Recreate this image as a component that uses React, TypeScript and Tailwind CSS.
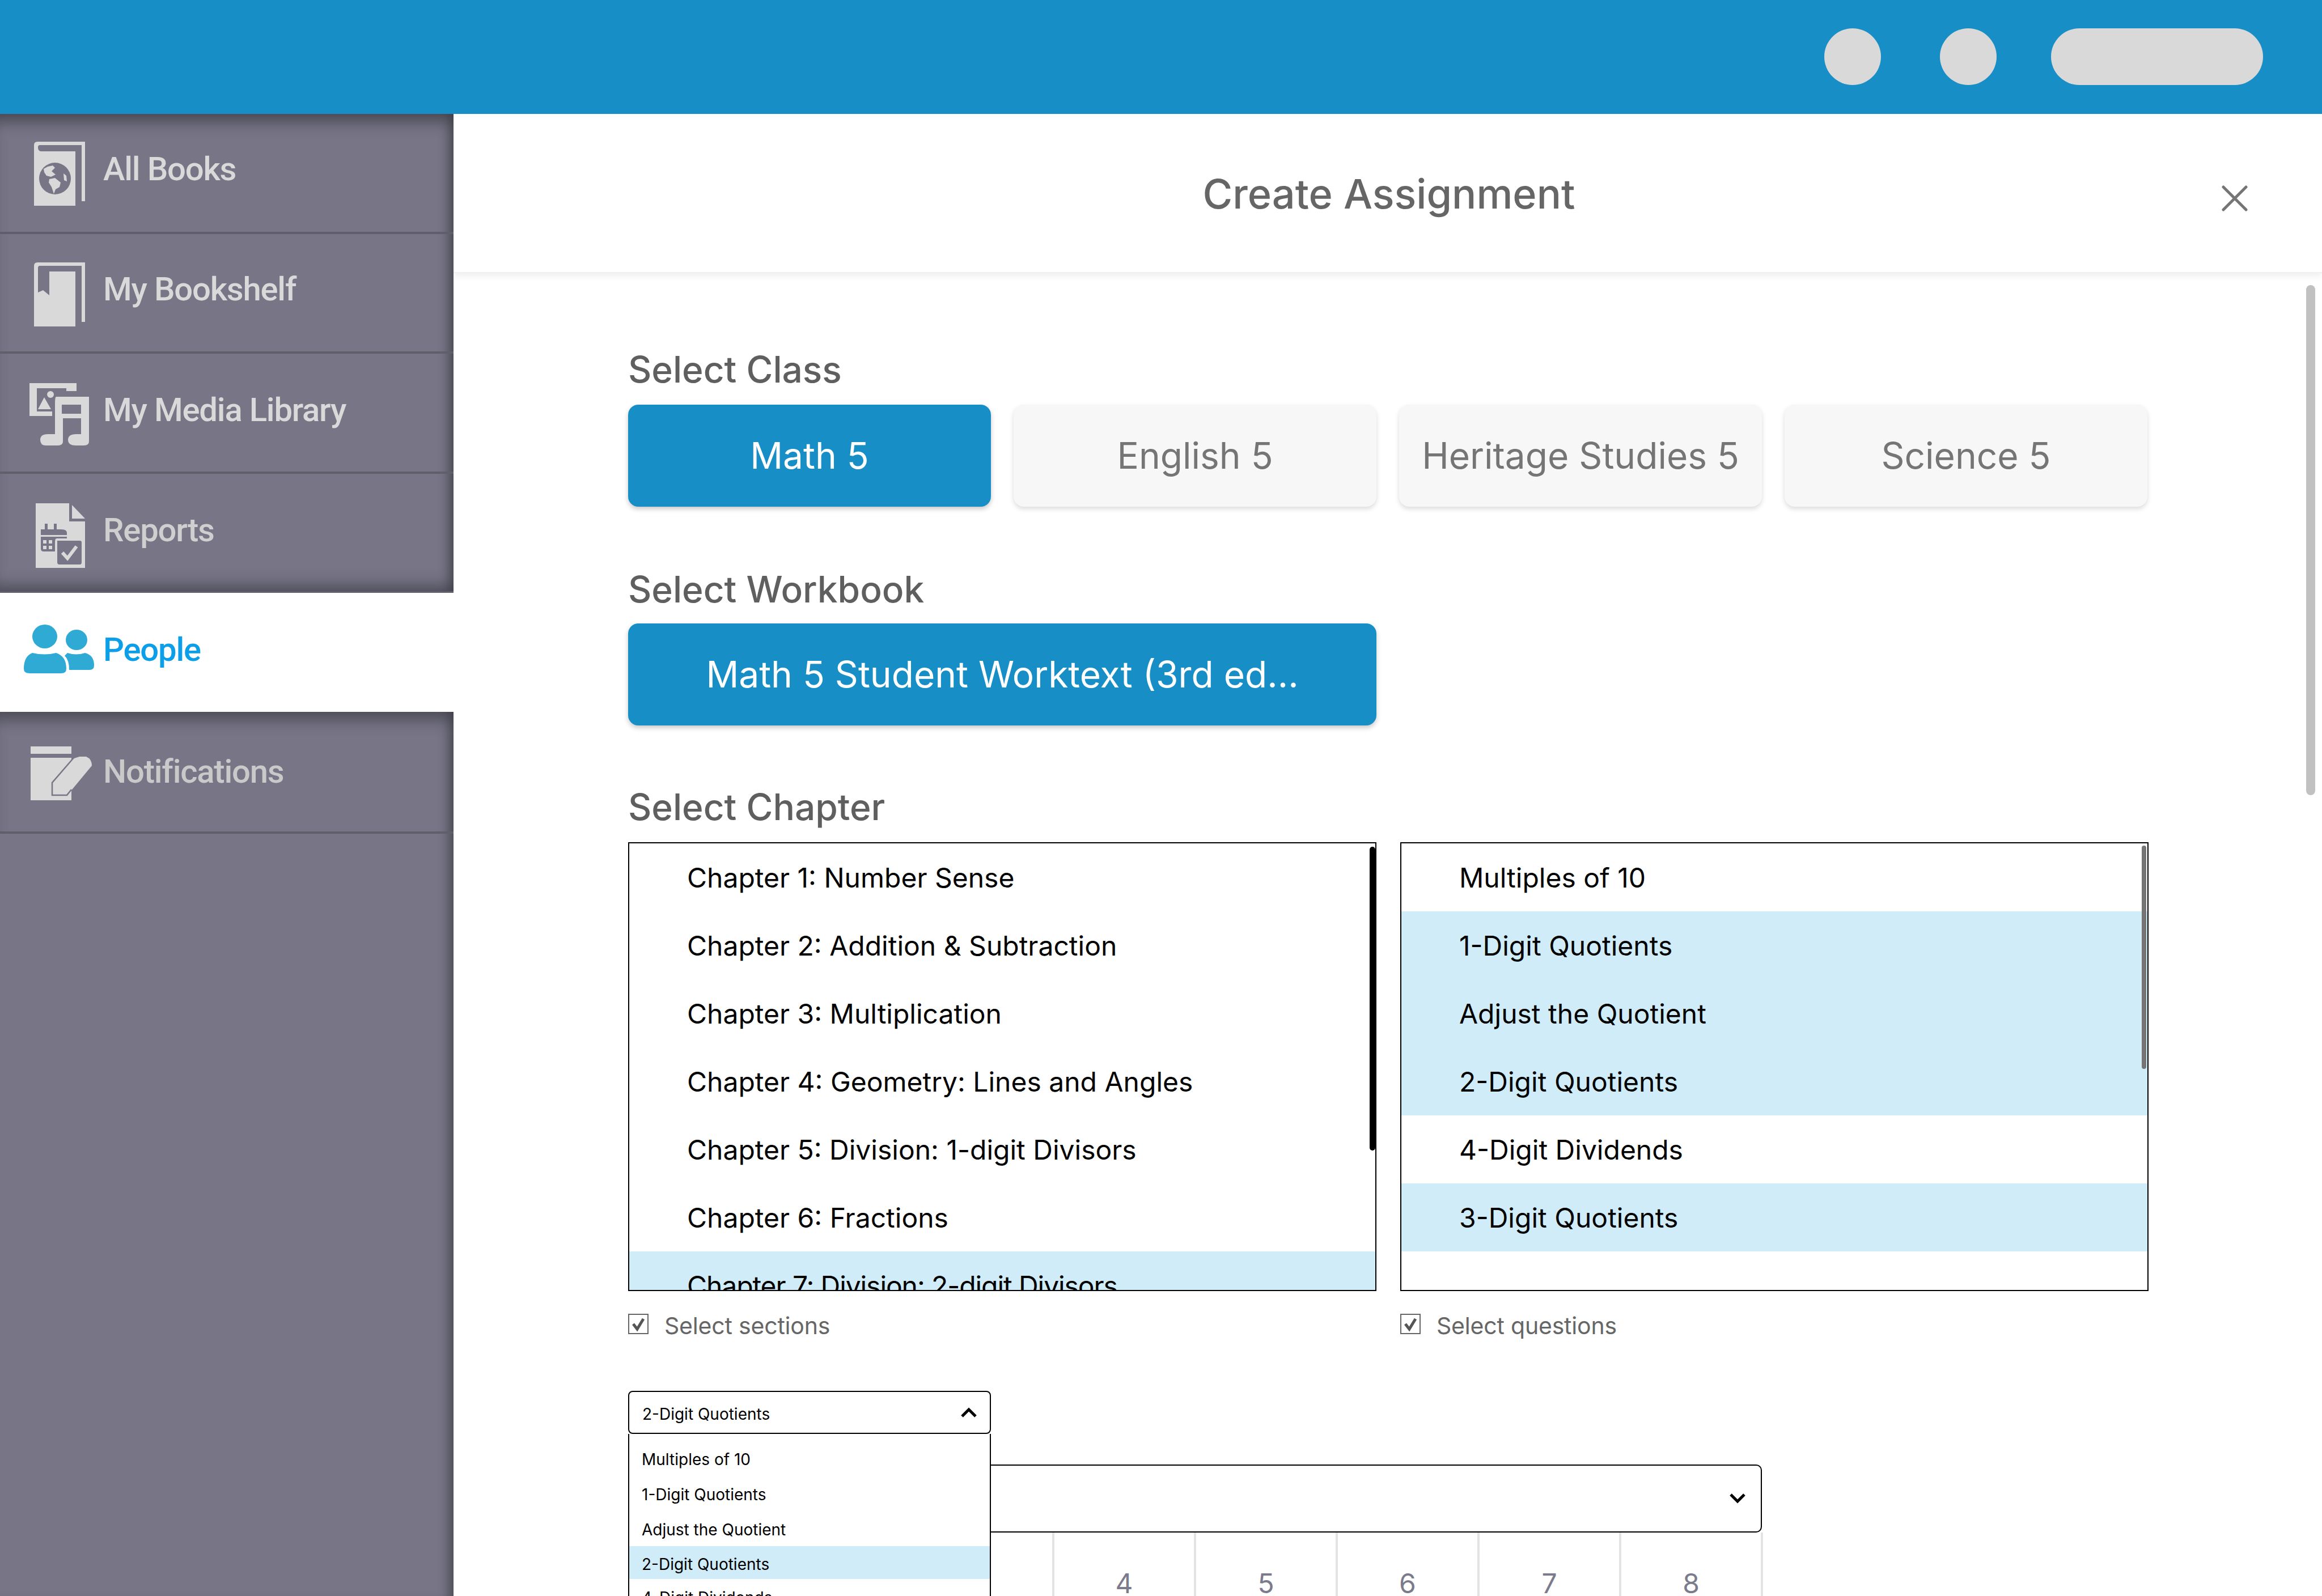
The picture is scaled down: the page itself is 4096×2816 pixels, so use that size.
const SANS = "font-['Inter','Liberation_Sans',sans-serif]";

function AllBooksIcon() {
  return (
    <svg width="90" height="113" viewBox="0 0 90 113" fill="#d9d9d9">
      <path d="M6 0H90V105H84V6H10Q7 6 7 10Q7 16 12 17H73V113H0V6Q0 0 6 0Z" />
      <circle cx="37" cy="65" r="28" fill="#777586" />
      <path d="M17 48L24 44L33 42L37 46L31 52L38 58L30 62L22 60L18 54ZM27 66L37 64L47 72L45 80L38 84L35 92L31 80L26 72ZM52 56L57 60L58 70L53 68Z" />
    </svg>
  );
}

function BookshelfIcon() {
  return (
    <svg width="90" height="113" viewBox="0 0 90 113" fill="#d9d9d9">
      <path d="M6 0H90V105H84V6H10Q7 6 7 10V53L16 49L27 58V16H73V113H0V6Q0 0 6 0Z" />
    </svg>
  );
}

function MediaIcon() {
  return (
    <svg width="105" height="110" viewBox="0 0 105 110" fill="#d9d9d9">
      <path fillRule="evenodd" d="M0 0H83V14H65V9H13V50H40V58H0Z" />
      <path d="M15 46L26 25L38 46ZM37 14A6 6 0 1 0 37.1 26A6 6 0 1 0 37 14Z" />
      <path fillRule="evenodd" d="M47 24H105V103Q105 110 96 110H82Q68 110 68 100Q68 90 82 90H91V62H59V103Q59 110 50 110H29Q19 110 19 100Q19 90 32 90H45V36Q45 24 47 24ZM57 38V54H91V38Z" />
    </svg>
  );
}

function ReportsIcon() {
  return (
    <svg width="88" height="114" viewBox="0 0 88 114">
      <path fill="#d9d9d9" d="M0 0H59V32H87V114H0Z" />
      <path fill="#d9d9d9" d="M64 3L87 27H64Z" />
      <path fill="#777586" d="M9 46H16V36H21V46H32V36H37V46H45Q55 46 55 52V56H9ZM9 59H55V62H37Q34 62 34 68V85H14Q9 85 9 80Z" />
      <path fill="#d9d9d9" d="M13 65H19V71H13ZM23 65H29V71H23ZM13 75H19V81H13ZM23 75H29V81H23Z" />
      <path fill="#777586" d="M38 66H78Q81 66 81 69V104Q81 108 78 108H42Q38 108 38 104Z" />
      <path fill="none" stroke="#d9d9d9" strokeWidth="6" d="M47 87L56 97L72 76" />
    </svg>
  );
}

function PeopleIcon() {
  return (
    <svg width="124" height="86" viewBox="0 0 124 86" fill="#2eaad4">
      <ellipse cx="37" cy="21" rx="22" ry="21" />
      <ellipse cx="93" cy="27" rx="19" ry="18" />
      <path d="M15 50Q37 55 57 50Q75 56 75 78Q75 86 66 86H10Q0 86 0 78Q0 56 15 50Z" />
      <path d="M77 50Q92 55 108 50Q124 54 124 72Q124 80 116 80H80Q80 62 72 55Z" />
    </svg>
  );
}

function NotificationsIcon() {
  return (
    <svg width="108" height="95" viewBox="0 0 108 95" fill="#d9d9d9">
      <path d="M0 0H72V13H0Z" />
      <path d="M0 20H72V95H0Z" />
      <path d="M74 22L86 18H98Q108 22 108 34L64 87H38V64Z" />
      <path fill="none" stroke="#777586" strokeWidth="2.5" d="M76 20L38 64V86H64L72 76" />
    </svg>
  );
}

const navItems = [
  { label: "All Books", icon: <AllBooksIcon />, left: "pl-[60px]", text: "text-[#d9d9d9]", top: "pt-[49px]", textTop: "top-[62px]" },
  { label: "My Bookshelf", icon: <BookshelfIcon />, left: "pl-[60px]", text: "text-[#d9d9d9]", top: "pt-[50px]", textTop: "top-[62px]" },
  { label: "My Media Library", icon: <MediaIcon />, left: "pl-[52px]", text: "text-[#d9d9d9]", top: "pt-[52px]", textTop: "top-[64px]" },
  { label: "Reports", icon: <ReportsIcon />, left: "pl-[63px]", text: "text-[#cfcfcf]", top: "pt-[52px]", textTop: "top-[64px]" },
];

const NAV_TEXT = "absolute left-[182px] text-[58px] leading-[70px] font-medium tracking-[-1.2px] font-['Roboto',sans-serif]";

function NavRow({ item }: { item: (typeof navItems)[number] }) {
  return (
    <div className={`relative h-[211.6px] ${item.left} ${item.top} border-b-[4px] border-[#5f5e6b]`}>
      {item.icon}
      <span className={`${NAV_TEXT} ${item.textTop} ${item.text}`}>{item.label}</span>
    </div>
  );
}

function Sidebar() {
  return (
    <aside className="relative z-10 w-[800px] h-full shrink-0 bg-[#777586] shadow-[inset_-22px_0_18px_-14px_rgba(60,60,68,0.75)]">
      <div className="shadow-[inset_0_28px_24px_-14px_rgba(60,60,68,0.75)]">
        {navItems.slice(0, 3).map((item) => (
          <NavRow key={item.label} item={item} />
        ))}
      </div>
      <div className="shadow-[inset_0_-28px_24px_-14px_rgba(60,60,68,0.7)]">
        <NavRow item={navItems[3]} />
      </div>
      <div className="relative -mt-[1px] h-[210px] bg-white pl-[42px] pt-[56px]">
        <PeopleIcon />
        <span className={`${NAV_TEXT} top-[65px] text-[#0c9fe9]`}>People</span>
      </div>
      <div className="relative h-[215px] pl-[54px] pt-[61px] border-b-[4px] border-[#5f5e6b] shadow-[inset_0_28px_24px_-14px_rgba(60,60,68,0.7)]">
        <NotificationsIcon />
        <span className={`${NAV_TEXT} top-[70px] text-[#c9c9c9]`}>Notifications</span>
      </div>
    </aside>
  );
}

function ChoiceButton({ label, active, wide }: { label: string; active?: boolean; wide?: boolean }) {
  return (
    <div
      className={`h-[180px] rounded-[18px] flex items-center justify-center text-[64px] ${wide ? "w-[1320px]" : "w-[640px]"} ${
        active
          ? "bg-[#188ec7] text-white shadow-[0_4px_8px_rgba(0,0,0,0.22)]"
          : "bg-[#f7f7f7] text-[#757575] shadow-[0_4px_8px_rgba(0,0,0,0.14)]"
      }`}
    >
      {label}
    </div>
  );
}

function ListBox({
  rows,
  thumb,
}: {
  rows: { label: string; selected?: boolean; tight?: boolean }[];
  thumb: string;
}) {
  return (
    <div className="relative w-[1320px] h-[792px] border-[2px] border-black overflow-hidden">
      {rows.map((r) => (
        <div
          key={r.label}
          className={`h-[120px] flex items-center pl-[102px] pt-[2px] text-[48px] text-black whitespace-nowrap ${r.selected ? "bg-[#d0ecf9]" : "bg-white"} ${r.tight ? "tracking-[-1.08px]" : ""}`}
        >
          {r.label}
        </div>
      ))}
      <div className={thumb} />
    </div>
  );
}

function CheckRow({ label }: { label: string }) {
  return (
    <div className="w-[1320px] flex items-center gap-[28px] h-[36px]">
      <svg width="36" height="36" viewBox="0 0 36 36" className="shrink-0">
        <rect x="1" y="1" width="34" height="34" fill="white" stroke="#666666" strokeWidth="2" />
        <path d="M9 18L16 27L27 9" fill="none" stroke="#555555" strokeWidth="5" />
      </svg>
      <span className="text-[41px] text-[#666666] translate-y-[4px] tracking-[-0.2px]">{label}</span>
    </div>
  );
}

function Chevron({ up }: { up?: boolean }) {
  return (
    <svg width="30" height="18" viewBox="0 0 30 18" className="shrink-0">
      <path d={up ? "M3 16L15 4L27 16" : "M3 2L15 14L27 2"} fill="none" stroke="black" strokeWidth="5" />
    </svg>
  );
}

export default function App() {
  return (
    <div className={`w-[4096px] h-[2816px] overflow-hidden flex flex-col bg-white ${SANS}`}>
      <header className="h-[201px] shrink-0 bg-[#188ec7] flex items-center justify-end pr-[104px] pb-[1px]">
        <div className="w-[100px] h-[100px] rounded-full bg-[#d9d9d9]" />
        <div className="w-[100px] h-[100px] rounded-full bg-[#d9d9d9] ml-[104px]" />
        <div className="w-[374px] h-[100px] rounded-full bg-[#d9d9d9] ml-[96px]" />
      </header>
      <div className="flex flex-1 min-h-0">
        <Sidebar />
        <main className="relative flex-1 min-w-0 flex flex-col">
          <div className="relative h-[281px] shrink-0 flex items-center justify-center border-b-[2px] border-[#f0f0f0] shadow-[0_6px_10px_rgba(0,0,0,0.06)]">
            <h1 className="text-[72px] font-medium text-[#666666] translate-x-[2px] translate-y-[1px]">Create Assignment</h1>
            <svg width="46" height="46" viewBox="0 0 46 46" className="absolute left-[3119px] top-[126px]">
              <path d="M3 3L43 43M43 3L3 43" fill="none" stroke="#757575" strokeWidth="5" strokeLinecap="round" />
            </svg>
          </div>
          <div className="absolute left-[3268px] top-[302px] w-[16px] h-[900px] rounded-full bg-[#c1c1c1]" />
          <div className="pl-[308px] flex flex-col items-start">
            <h2 className="mt-[130px] h-[80px] text-[64px] leading-[80px] font-medium text-[#5f5f5f]">Select Class</h2>
            <div className="flex gap-[40px] mt-[22px]">
              <ChoiceButton label="Math 5" active />
              <ChoiceButton label="English 5" />
              <ChoiceButton label="Heritage Studies 5" />
              <ChoiceButton label="Science 5" />
            </div>
            <h2 className="mt-[106px] h-[80px] text-[64px] leading-[80px] font-medium text-[#5f5f5f]">Select Workbook</h2>
            <div className="mt-[20px]">
              <ChoiceButton label="Math 5 Student Worktext (3rd ed..." active wide />
            </div>
            <h2 className="mt-[104px] h-[80px] text-[64px] leading-[80px] font-medium text-[#5f5f5f]">Select Chapter</h2>
            <div className="flex gap-[42px] mt-[22px]">
              <ListBox
                thumb="absolute right-0 top-[6px] w-[10px] h-[536px] rounded-full bg-black"
                rows={[
                  { label: "Chapter 1: Number Sense" },
                  { label: "Chapter 2: Addition & Subtraction" },
                  { label: "Chapter 3: Multiplication" },
                  { label: "Chapter 4: Geometry: Lines and Angles" },
                  { label: "Chapter 5: Division: 1-digit Divisors" },
                  { label: "Chapter 6: Fractions" },
                  { label: "Chapter 7: Division: 2-digit Divisors", selected: true, tight: true },
                ]}
              />
              <ListBox
                thumb="absolute right-[2px] top-[4px] w-[8px] h-[394px] rounded-full bg-[#757575]"
                rows={[
                  { label: "Multiples of 10" },
                  { label: "1-Digit Quotients", selected: true },
                  { label: "Adjust the Quotient", selected: true },
                  { label: "2-Digit Quotients", selected: true },
                  { label: "4-Digit Dividends" },
                  { label: "3-Digit Quotients", selected: true },
                ]}
              />
            </div>
            <div className="flex gap-[42px] mt-[40px]">
              <CheckRow label="Select sections" />
              <CheckRow label="Select questions" />
            </div>
            <div className="relative mt-[230px] w-[2000px]">
              <div className="h-[120px] rounded-[10px] border-[2px] border-black flex items-center justify-end pr-[26px] bg-white">
                <Chevron />
              </div>
              <div className="grid grid-cols-8 h-[200px] ml-[2px] w-[2000px]">
                {[1, 2, 3, 4, 5, 6, 7, 8].map((n) => (
                  <div
                    key={n}
                    className="border-r-[4px] border-[#e3e3e3] flex justify-center pt-[60px] text-[48px] leading-[60px] text-[#7b7b8b]"
                  >
                    {n}
                  </div>
                ))}
              </div>
              <div className="absolute left-0 -top-[130px] w-[640px] bg-white">
                <div className="h-[76px] rounded-[8px] border-[2px] border-black flex items-center justify-between pl-[23px] pr-[22px] text-[28px] bg-white">
                  <span className="translate-y-[3px]">2-Digit Quotients</span>
                  <Chevron up />
                </div>
                <div className="border-x-[2px] border-black pt-[12px] text-[28px] bg-white">
                  {["Multiples of 10", "1-Digit Quotients", "Adjust the Quotient"].map((t) => (
                    <div key={t} className="h-[62px] flex items-center pl-[22px] pt-[3px]">
                      {t}
                    </div>
                  ))}
                  <div className="h-[58px] flex items-center pl-[22px] pt-[5px] bg-[#d0ecf9]">2-Digit Quotients</div>
                  <div className="h-[62px] flex items-center pl-[22px] pt-[3px]">4-Digit Dividends</div>
                </div>
              </div>
            </div>
          </div>
        </main>
      </div>
    </div>
  );
}
